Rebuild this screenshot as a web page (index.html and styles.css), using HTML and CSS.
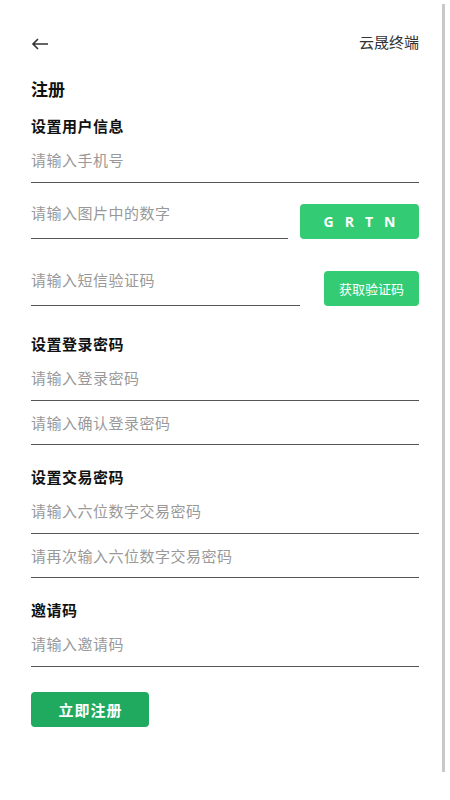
FILE: index.html
```html
<!DOCTYPE html>
<html lang="zh-CN">
<head>
    <meta charset="UTF-8">
    <meta name="viewport" content="width=device-width, initial-scale=1.0">
    <title>注册</title>
    <link rel="stylesheet" href="styles.css">
</head>
<body>
    <div class="page">
        <div class="topbar">
            <svg class="back" width="18" height="12" viewBox="0 0 18 12">
                <path d="M17 6H2 M7 1L2 6l5 5" fill="none" stroke="#333" stroke-width="1.6"/>
            </svg>
            <span class="brand">云晟终端</span>
        </div>

        <h1 class="title">注册</h1>

        <h2 class="section">设置用户信息</h2>
        <input class="field" type="text" placeholder="请输入手机号">
        <div class="row row-captcha">
            <input class="field short captcha" type="text" placeholder="请输入图片中的数字">
            <button class="btn btn-code">GRTN</button>
        </div>
        <div class="row row-sms">
            <input class="field short sms" type="text" placeholder="请输入短信验证码">
            <button class="btn btn-sms">获取验证码</button>
        </div>

        <h2 class="section sec-login">设置登录密码</h2>
        <input class="field" type="password" placeholder="请输入登录密码">
        <input class="field" type="password" placeholder="请输入确认登录密码">

        <h2 class="section">设置交易密码</h2>
        <input class="field" type="password" placeholder="请输入六位数字交易密码">
        <input class="field" type="password" placeholder="请再次输入六位数字交易密码">

        <h2 class="section">邀请码</h2>
        <input class="field" type="text" placeholder="请输入邀请码">

        <button class="btn btn-submit">立即注册</button>
    </div>
    <div class="scrollbar"></div>
</body>
</html>
```

FILE: styles.css
```css
body {
    margin: 0;
    background: #fff;
    font-family: "Microsoft YaHei", "Noto Sans CJK SC", "Noto Sans", sans-serif;
    color: #222;
}
.page {
    padding: 34px 31px 60px;
}
.topbar {
    display: flex;
    justify-content: space-between;
    align-items: center;
    height: 16px;
}
.back {
    margin-top: 4px;
}
.brand {
    font-size: 15px;
    color: #333;
    line-height: 16px;
}
.title {
    margin: 28px 0 0;
    font-size: 17px;
    line-height: 22px;
    font-weight: bold;
    color: #111;
}
.section {
    margin: 22px 0 0;
    font-size: 15px;
    line-height: 20px;
    font-weight: bold;
    letter-spacing: 0.5px;
    color: #111;
}
.title + .section {
    margin-top: 16px;
}
.sec-login {
    margin-top: 28px;
}
.field {
    display: block;
    box-sizing: border-box;
    width: 100%;
    height: 44px;
    margin: 0;
    padding: 0 0 1px;
    border: none;
    border-bottom: 1px solid #555;
    outline: none;
    background: transparent;
    font-family: inherit;
    font-size: 15px;
    line-height: 20px;
    color: #333;
    letter-spacing: 0.5px;
}
.section + .field {
    height: 47px;
    padding: 0;
}
.field::placeholder {
    color: #999;
}
.row {
    display: flex;
    align-items: flex-end;
    justify-content: space-between;
}
.row-captcha {
    margin-top: 20px;
}
.row-sms {
    margin-top: 31px;
}
.field.short {
    height: 36px;
    padding: 0 0 17px;
}
.captcha {
    width: 257px;
}
.sms {
    width: 269px;
}
.btn {
    border: none;
    border-radius: 4px;
    color: #fff;
    font-family: inherit;
    cursor: pointer;
    padding: 0;
}
.btn-code {
    width: 119px;
    height: 35px;
    background: #33cc74;
    font-family: "Open Sans", "Noto Sans", sans-serif;
    font-weight: bold;
    font-size: 14px;
    letter-spacing: 11px;
    text-indent: 11px;
}
.btn-sms {
    width: 95px;
    height: 35px;
    background: #33cc74;
    font-size: 13px;
}
.btn-submit {
    display: block;
    margin-top: 25px;
    width: 118px;
    height: 35px;
    background: #1faa5f;
    font-size: 15px;
    font-weight: bold;
    letter-spacing: 1px;
    text-indent: 1px;
}
.scrollbar {
    position: fixed;
    top: 4px;
    left: 442px;
    width: 3px;
    height: 768px;
    background: #c8c8c8;
}
```
